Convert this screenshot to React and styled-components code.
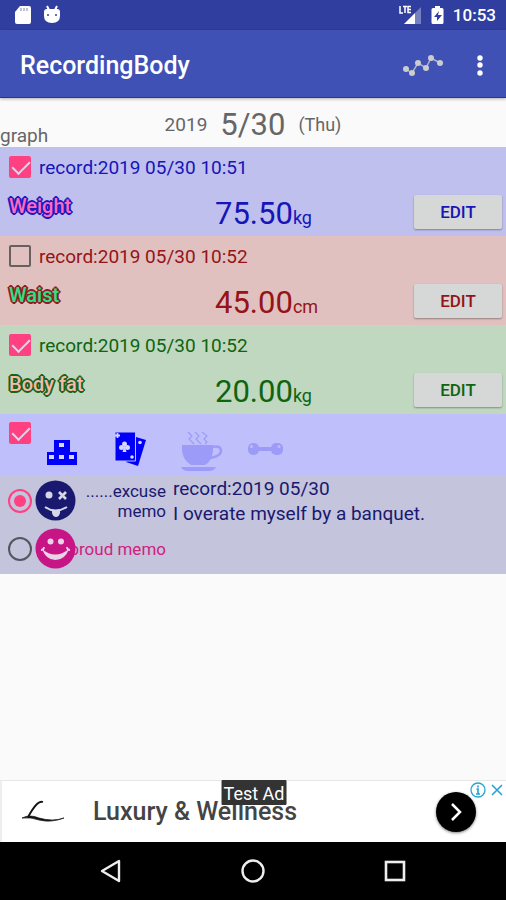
import styled, { createGlobalStyle } from 'styled-components'

const GlobalStyle = createGlobalStyle`
  * {
    box-sizing: border-box;
  }

  body {
    margin: 0;
    background: #fafafa;
    font-family: Roboto, "Liberation Sans", sans-serif;
  }

  button {
    font-family: inherit;
    border: 0;
    padding: 0;
    cursor: pointer;
  }
`

const Page = styled.div`
  display: flex;
  flex-direction: column;
  min-height: 100vh;
  overflow: hidden;
`

const StatusBar = styled.div`
  display: flex;
  align-items: center;
  gap: 12px;
  height: 30px;
  padding: 0 10px 0 14px;
  background: #303f9f;
  color: #fff;
`

const StatusIcons = styled.div`
  display: flex;
  align-items: center;
  gap: 9px;
  margin-left: auto;
`

const Clock = styled.span`
  font-size: 17px;
  font-weight: 500;
`

const AppBar = styled.header`
  display: flex;
  align-items: center;
  height: 68px;
  padding: 4px 13px 0 20px;
  background: #3f51b5;
  border-bottom: 1px solid #1b37a0;
  box-shadow: 0 1px 3px rgba(0, 0, 0, 0.3);
  color: #fff;
  position: relative;
`

const Title = styled.h1`
  margin: 0;
  flex: 1;
  font-size: 25px;
  font-weight: 500;
`

const BarButton = styled.button`
  display: flex;
  align-items: center;
  justify-content: center;
  width: ${(props) => props.$width};
  height: 40px;
  background: none;
`

const DateBar = styled.section`
  display: grid;
  grid-template-columns: 1fr auto 1fr;
  height: 49px;
  color: #666;
  font-size: 19px;
`

const GraphLabel = styled.span`
  align-self: end;
  line-height: 22px;
`

const DateText = styled.div`
  display: flex;
  align-items: center;
  gap: 13px;
  padding-top: 4px;
`

const Day = styled.span`
  font-size: 31px;
`

const Weekday = styled.span`
  font-size: 18px;
`

const Record = styled.section`
  display: grid;
  grid-template-columns: 206px 1fr 90px;
  grid-template-rows: 40px 49px;
  height: 89px;
  padding: 0 4px 0 9px;
  background: ${(props) => props.$background};
  color: ${(props) => props.$color};
`

const RecordDate = styled.label`
  grid-column: 1 / -1;
  display: flex;
  align-items: center;
  gap: 8px;
  font-size: 19px;
`

const CheckBox = styled.input`
  appearance: none;
  position: relative;
  flex: none;
  width: 22px;
  height: 22px;
  margin: 0;
  border: 2px solid #67605f;
  border-radius: 2px;

  &:checked {
    background: #ff4081;
    border-color: #ff4081;
  }

  &:checked::after {
    content: "";
    position: absolute;
    left: 5px;
    top: -1px;
    width: 8px;
    height: 15px;
    border: solid #e6d2ea;
    border-width: 0 2px 2px 0;
    transform: rotate(45deg);
  }
`

const Kind = styled.span`
  padding-top: 8px;
  font-size: 20px;
  font-weight: 500;
  line-height: 22px;
  color: ${(props) => props.$fill};
  text-shadow:
    2px 0 ${(props) => props.$line}, -2px 0 ${(props) => props.$line},
    0 2px ${(props) => props.$line}, 0 -2px ${(props) => props.$line},
    1px 1px ${(props) => props.$line}, -1px -1px ${(props) => props.$line},
    1px -1px ${(props) => props.$line}, -1px 1px ${(props) => props.$line};
`

const Value = styled.span`
  padding-top: 9px;
  font-size: 31px;
  line-height: 36px;
`

const Unit = styled.small`
  font-size: 18px;
`

const EditButton = styled.button`
  width: 88px;
  height: 34px;
  margin-top: 8px;
  justify-self: end;
  border-radius: 2px;
  background: #d6d7d7;
  box-shadow: 0 1px 2px rgba(0, 0, 0, 0.35);
  color: inherit;
  font-size: 17px;
  font-weight: 500;
`

const Habits = styled.section`
  display: flex;
  height: 61px;
  padding: 8px 9px 0;
  background: #bfbffb;
`

const HabitButton = styled.button`
  display: flex;
  align-items: flex-start;
  width: 68px;
  height: 50px;
  padding-top: 6px;
  background: none;
  color: ${(props) => (props.$on ? '#0000fa' : '#9c9cf8')};
`

const HabitList = styled.div`
  display: flex;
`

const Memos = styled.section`
  padding-bottom: 1px;
  background: #c4c4dc;
`

const Memo = styled.div`
  display: grid;
  grid-template-columns: 166px 1fr;
  gap: 7px;
  height: 49px;
  color: #191970;
`

const MemoLabel = styled.label`
  display: flex;
  align-items: center;
  padding-left: 8px;
  color: ${(props) => props.$color};
  font-size: 17px;
`

const Face = styled.svg`
  flex: none;
  z-index: 1;
  margin: 0 -10px 0 3px;
`

const MemoName = styled.span`
  flex: 1;
  text-align: right;
  line-height: 20px;
  white-space: nowrap;
`

const Radio = styled.input`
  appearance: none;
  display: grid;
  place-items: center;
  flex: none;
  width: 24px;
  height: 24px;
  margin: 0;
  border: 2px solid #55555f;
  border-radius: 50%;

  &:checked {
    border-color: #ff4081;
  }

  &:checked::after {
    content: "";
    width: 12px;
    height: 12px;
    border-radius: 50%;
    background: #ff4081;
  }
`

const MemoText = styled.p`
  margin: 0;
  padding-top: 1px;
  font-size: 19px;
  line-height: 25px;
`

const Ad = styled.aside`
  position: relative;
  display: flex;
  align-items: center;
  height: 62px;
  margin-top: auto;
  padding: 0 30px 0 20px;
  background: #fff;
  border-top: 1px solid #e6e6e6;
  border-left: 2px solid #eee;
`

const AdLink = styled.a`
  flex: 1;
  margin-left: 26px;
  color: #444;
  font-size: 25px;
  font-weight: 500;
  text-decoration: none;
`

const AdBadge = styled.span`
  position: absolute;
  top: -1px;
  left: 50%;
  transform: translateX(-50%);
  padding: 2px 2px 0;
  background: #333;
  color: #fff;
  font-size: 18px;
  line-height: 23px;
  border-radius: 1px;
`

const AdGo = styled.button`
  display: flex;
  align-items: center;
  justify-content: center;
  width: 40px;
  height: 40px;
  border-radius: 50%;
  background: #000;
  box-shadow: 0 1px 3px rgba(0, 0, 0, 0.5);
`

const AdChoices = styled.div`
  position: absolute;
  top: 0;
  right: 0;
  display: flex;
  gap: 4px;
  padding: 1px 2px 1px 1px;
  background: #fff;
  border-radius: 0 0 0 6px;
`

const AdChoice = styled.button`
  display: flex;
  background: none;
`

const NavBar = styled.nav`
  display: flex;
  justify-content: center;
  align-items: center;
  gap: 102px;
  height: 58px;
  background: #000;
`

const NavButton = styled.button`
  display: flex;
  justify-content: center;
  width: 40px;
  background: none;
`

const records = [
  { kind: 'Weight', time: '10:51', value: '75.50', unit: 'kg', checked: true, color: '#1515b8', background: '#c0c0ee', fill: '#ff69c0', line: '#1b1bc0' },
  { kind: 'Waist', time: '10:52', value: '45.00', unit: 'cm', checked: false, color: '#941418', background: '#e1c0c0', fill: '#2fe08a', line: '#8b2020' },
  { kind: 'Body fat', time: '10:52', value: '20.00', unit: 'kg', checked: true, color: '#0f640f', background: '#c0d8c0', fill: '#f9b9ad', line: '#176417' },
]

function SdCard() {
  return (
    <svg width="17" height="20" viewBox="0 0 17 20">
      <path d="M6 1h9q2 0 2 2v14q0 2-2 2H3q-2 0-2-2V7z" fill="#fff" />
      <path d="M7 3v3M10 3v3M13 3v3" stroke="#7f87bd" strokeWidth="1" />
    </svg>
  )
}

function Droid() {
  return (
    <svg width="18" height="20" viewBox="0 0 18 20">
      <path d="M4 1l2 4M14 1l-2 4" stroke="#fff" strokeWidth="2" />
      <path d="M1 7q0-3 3-3h10q3 0 3 3v4q0 7-8 7t-8-7z" fill="#fff" />
      <circle cx="5" cy="10" r="1" fill="#303f9f" />
      <circle cx="13" cy="10" r="1" fill="#303f9f" />
    </svg>
  )
}

function Signal() {
  return (
    <svg width="23" height="20" viewBox="0 0 23 20">
      <path d="M22 2v17H16V8z" fill="#7580bf" />
      <path d="M5 19L16 8v11z" fill="#fff" />
      <path d="M1 1v7h3M4 1.500h4M6 1v7M12 1.500H9V7.500h3M9 4.500h3" fill="none" stroke="#fff" strokeWidth="1.500" />
    </svg>
  )
}

function Battery() {
  return (
    <svg width="13" height="20" viewBox="0 0 13 20">
      <path d="M4 1h5v2h2q1.500 0 1.500 1.500v13q0 1.500-1.500 1.500H2Q.5 19 .5 17.500v-13Q.5 3 2 3h2z" fill="#fff" />
      <path d="M8 6L3 12h3v4l5-6H7z" fill="#303f9f" />
    </svg>
  )
}

function GraphIcon() {
  const points = [[4, 15], [10, 19], [16, 9], [24, 14], [29, 4], [38, 9]]
  return (
    <svg width="42" height="24" viewBox="0 0 42 24">
      <polyline points={points.join(' ')} fill="none" stroke="#aeb2ca" strokeWidth="1.500" />
      {points.map(([x, y]) => (
        <circle key={x} cx={x} cy={y} r="3" fill="#ccc" />
      ))}
    </svg>
  )
}

function Dots() {
  return (
    <svg width="6" height="22" viewBox="0 0 6 22" fill="#fff">
      <circle cx="3" cy="3" r="2.700" />
      <circle cx="3" cy="10" r="2.700" />
      <circle cx="3" cy="18" r="2.700" />
    </svg>
  )
}

function Blocks() {
  return (
    <svg width="60" height="40" viewBox="0 0 60 40">
      <path d="M8 12h16v12h7v13H1V24h7z" fill="currentColor" transform="translate(15 0)" />
      <path d="M28 15h5v4h-5zM18 27h5v4h-5zM28 27h5v4h-5zM38 27h5v4h-5z" fill="#d6d6ff" />
    </svg>
  )
}

function Cards() {
  return (
    <svg width="60" height="40" viewBox="0 0 60 40">
      <path d="M37 9l10 3-8 26-12-4z" fill="currentColor" />
      <path d="M16 4h20.500v29H16z" fill="currentColor" stroke="#bfbffb" strokeWidth="1" />
      <circle cx="25.500" cy="16" r="2.500" fill="#d6d6ff" />
      <circle cx="22.500" cy="19.500" r="2.500" fill="#d6d6ff" />
      <circle cx="28.500" cy="19.500" r="2.500" fill="#d6d6ff" />
      <path d="M25.500 17l2 7h-4z" fill="#d6d6ff" />
      <path d="M16 7.500h5M18.500 5v5" stroke="#d6d6ff" strokeWidth="1.800" />
      <circle cx="33" cy="29" r="1.800" fill="#d6d6ff" />
      <circle cx="41" cy="14.500" r="1.800" fill="#d6d6ff" />
    </svg>
  )
}

function Cup() {
  return (
    <svg width="60" height="44" viewBox="0 0 60 44">
      <path d="M15 17h31v6q-1 10-8 14H24q-8-5-9-14z" fill="currentColor" />
      <path d="M45 19q9-2 9 4 0 5-11 7" fill="none" stroke="currentColor" strokeWidth="2.500" />
      <path d="M14 39h35q-2 4-7 4H21q-5 0-7-4z" fill="currentColor" />
      <path d="M21 4l4 4-3 3 5 5M28 4l4 4-3 3 5 5M35 4l5 4-3 3 3 3-2 2" fill="none" stroke="currentColor" strokeWidth="1.200" />
    </svg>
  )
}

function Dumbbell() {
  return (
    <svg width="60" height="40" viewBox="0 0 60 40" fill="currentColor">
      <path d="M18 19h26v4H18z" />
      <rect x="13" y="15" width="11" height="12" rx="5" />
      <rect x="36" y="15" width="12" height="12" rx="5" />
      <circle cx="16.500" cy="18.500" r="1.500" fill="#bcbcfc" />
      <circle cx="44" cy="18.500" r="1.500" fill="#bcbcfc" />
    </svg>
  )
}

function ExcuseFace() {
  return (
    <Face width="41" height="41" viewBox="0 0 41 41">
      <circle cx="20.500" cy="20.500" r="20" fill="#191970" />
      <circle cx="14" cy="15" r="3.500" fill="#d6d6e8" />
      <path d="M24 12l7 7M31 12l-7 7" stroke="#d6d6e8" strokeWidth="2.600" />
      <path d="M10 27q10 7 22 0" fill="none" stroke="#d6d6e8" strokeWidth="2" />
      <path d="M17 30h8v3q-1 4-4 4t-4-4z" fill="#d6d6e8" />
    </Face>
  )
}

function ProudFace() {
  return (
    <Face width="41" height="41" viewBox="0 0 41 41">
      <circle cx="20.500" cy="20.500" r="20" fill="#c71585" />
      <circle cx="15.500" cy="13.500" r="3" fill="#e9d3e6" />
      <circle cx="26" cy="13.500" r="3" fill="#e9d3e6" />
      <path d="M6 22q3 0 3-3M35 22q-3 0-3-3" fill="none" stroke="#e9d3e6" strokeWidth="1.800" />
      <path d="M7 21q13 11 27 0-4 11-13.500 11T7 21z" fill="#e9d3e6" />
    </Face>
  )
}

function Signature() {
  return (
    <svg width="45" height="26" viewBox="0 0 45 26">
      <path d="M21 3Q18 2 15 5 11 9 6 18" fill="none" stroke="#111" strokeWidth="1.800" />
      <path d="M0 19q8-4 17 0 14 4 25 0-13 5-25 2-8-3-17-2z" fill="#111" stroke="#111" strokeWidth=".7" />
    </svg>
  )
}

function RecordRow({ record }) {
  return (
    <Record $background={record.background} $color={record.color}>
      <RecordDate>
        <CheckBox type="checkbox" defaultChecked={record.checked} />
        record:2019 05/30 {record.time}
      </RecordDate>
      <Kind $fill={record.fill} $line={record.line}>{record.kind}</Kind>
      <Value>
        {record.value}
        <Unit>{record.unit}</Unit>
      </Value>
      <EditButton type="button">EDIT</EditButton>
    </Record>
  )
}

export default function App() {
  return (
    <>
      <GlobalStyle />
      <Page>
        <StatusBar>
          <SdCard />
          <Droid />
          <StatusIcons>
            <Signal />
            <Battery />
            <Clock>10:53</Clock>
          </StatusIcons>
        </StatusBar>
        <AppBar>
          <Title>RecordingBody</Title>
          <BarButton type="button" aria-label="Graph" $width="88px"><GraphIcon /></BarButton>
          <BarButton type="button" aria-label="More options" $width="26px"><Dots /></BarButton>
        </AppBar>
        <DateBar>
          <GraphLabel>graph</GraphLabel>
          <DateText>
            <span>2019</span>
            <Day>5/30</Day>
            <Weekday>(Thu)</Weekday>
          </DateText>
        </DateBar>
        {records.map((record) => (
          <RecordRow key={record.kind} record={record} />
        ))}
        <Habits>
          <CheckBox type="checkbox" aria-label="Habits" defaultChecked />
          <HabitList>
            <HabitButton type="button" aria-label="Sweets" $on><Blocks /></HabitButton>
            <HabitButton type="button" aria-label="Cards" $on><Cards /></HabitButton>
            <HabitButton type="button" aria-label="Coffee"><Cup /></HabitButton>
            <HabitButton type="button" aria-label="Training"><Dumbbell /></HabitButton>
          </HabitList>
        </Habits>
        <Memos>
          <Memo>
            <MemoLabel $color="#191970">
              <Radio type="radio" name="memo" defaultChecked />
              <ExcuseFace />
              <MemoName>......excuse<br />memo</MemoName>
            </MemoLabel>
            <MemoText>record:2019 05/30<br />I overate myself by a banquet.</MemoText>
          </Memo>
          <Memo>
            <MemoLabel $color="#d02080">
              <Radio type="radio" name="memo" />
              <ProudFace />
              <MemoName>proud memo</MemoName>
            </MemoLabel>
          </Memo>
        </Memos>
        <Ad>
          <Signature />
          <AdLink href="#">Luxury &amp; Wellness</AdLink>
          <AdGo type="button" aria-label="Open">
            <svg width="20" height="22" viewBox="0 0 20 22">
              <path d="M6 3l8 8-8 8" fill="none" stroke="#fff" strokeWidth="2.500" />
            </svg>
          </AdGo>
          <AdBadge>Test Ad</AdBadge>
          <AdChoices>
            <AdChoice type="button" aria-label="Ad choices">
              <svg width="16" height="16" viewBox="0 0 16 16" fill="none" stroke="#27a5d0">
                <circle cx="8" cy="8" r="7" strokeWidth="1.300" />
                <path d="M8 3.500v2M6.500 7H8v5M6 12h4" strokeWidth="1.700" />
              </svg>
            </AdChoice>
            <AdChoice type="button" aria-label="Close ad">
              <svg width="14" height="16" viewBox="0 0 14 16">
                <path d="M2 3l10 10M12 3L2 13" stroke="#27a5d0" strokeWidth="1.600" />
              </svg>
            </AdChoice>
          </AdChoices>
        </Ad>
        <NavBar>
          <NavButton type="button" aria-label="Back">
            <svg width="24" height="26" viewBox="0 0 24 26">
              <path d="M20 3v20L3 13z" fill="none" stroke="#eee" strokeWidth="2.400" strokeLinejoin="round" />
            </svg>
          </NavButton>
          <NavButton type="button" aria-label="Home">
            <svg width="24" height="26" viewBox="0 0 24 26">
              <circle cx="12" cy="13" r="10.500" fill="none" stroke="#eee" strokeWidth="2.400" />
            </svg>
          </NavButton>
          <NavButton type="button" aria-label="Recent apps">
            <svg width="24" height="26" viewBox="0 0 24 26">
              <rect x="3" y="4" width="18" height="18" fill="none" stroke="#eee" strokeWidth="2.600" />
            </svg>
          </NavButton>
        </NavBar>
      </Page>
    </>
  )
}
